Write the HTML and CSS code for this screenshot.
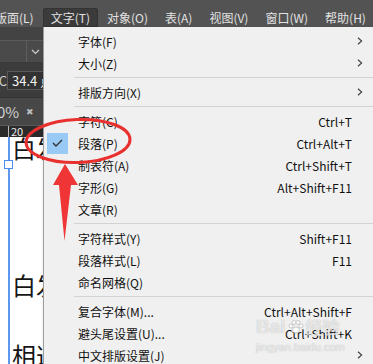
FILE: index.html
```html
<!DOCTYPE html>
<html lang="zh-CN">

<head>
    <meta charset="UTF-8" />
    <title>文字菜单</title>
    <link rel="stylesheet" href="styles.css">
</head>

<body>
    <!-- 菜单栏 -->
    <div class="menubar">
        <span class="mb-item first">版面(L)</span>
        <span class="mb-item active">文字(T)</span>
        <span class="mb-item">对象(O)</span>
        <span class="mb-item">表(A)</span>
        <span class="mb-item">视图(V)</span>
        <span class="mb-item">窗口(W)</span>
        <span class="mb-item">帮助(H)</span>
    </div>

    <!-- 工作区（左侧可见部分） -->
    <div class="workspace">
        <div class="p-row p-top"></div>
        <div class="p-row p-select">
            <span class="sel-field"></span>
            <span class="sel-drop">
                <svg width="9" height="6" viewBox="0 0 9 6"><path d="M1 1 L4.5 4.5 L8 1" fill="none" stroke="#cfcfcf" stroke-width="1.2"/></svg>
            </span>
        </div>
        <div class="p-row p-size">
            <span class="p-glyph">C</span>
            <span class="size-field">34.4 点</span>
        </div>
        <div class="p-row p-zoom">
            <span class="zoom-val">0%</span>
            <span class="zoom-x">✖</span>
        </div>
        <div class="ruler"><span class="tick"></span><span class="ruler-num">20</span></div>
        <div class="page">
            <span class="guide"></span>
            <span class="handle"></span>
            <p class="pg-line l1">白发渔樵</p>
            <p class="pg-line l2">白发渔樵</p>
            <p class="pg-line l3">相逢何必</p>
        </div>
    </div>

    <!-- 文字下拉菜单 -->
    <div class="menu">
        <div class="mi"><span></span><span>字体(F)</span><span></span><span class="sub"><svg width="6" height="8" viewBox="0 0 6 8"><path d="M1 0.8 L4.6 4 L1 7.2" fill="none" stroke="#444" stroke-width="1.2"/></svg></span></div>
        <div class="mi"><span></span><span>大小(Z)</span><span></span><span class="sub"><svg width="6" height="8" viewBox="0 0 6 8"><path d="M1 0.8 L4.6 4 L1 7.2" fill="none" stroke="#444" stroke-width="1.2"/></svg></span></div>
        <div class="sep"></div>
        <div class="mi"><span></span><span>排版方向(X)</span><span></span><span class="sub"><svg width="6" height="8" viewBox="0 0 6 8"><path d="M1 0.8 L4.6 4 L1 7.2" fill="none" stroke="#444" stroke-width="1.2"/></svg></span></div>
        <div class="sep"></div>
        <div class="mi"><span></span><span>字符(C)</span><span class="key">Ctrl+T</span><span></span></div>
        <div class="mi"><span class="ico"><svg width="11" height="8" viewBox="0 0 11 8"><path d="M1 4 L4 7 L10 1" fill="none" stroke="#333" stroke-width="1.4"/></svg></span><span>段落(P)</span><span class="key">Ctrl+Alt+T</span><span></span></div>
        <div class="mi"><span></span><span>制表符(A)</span><span class="key">Ctrl+Shift+T</span><span></span></div>
        <div class="mi"><span></span><span>字形(G)</span><span class="key">Alt+Shift+F11</span><span></span></div>
        <div class="mi"><span></span><span>文章(R)</span><span></span><span></span></div>
        <div class="sep"></div>
        <div class="mi"><span></span><span>字符样式(Y)</span><span class="key">Shift+F11</span><span></span></div>
        <div class="mi"><span></span><span>段落样式(L)</span><span class="key">F11</span><span></span></div>
        <div class="mi"><span></span><span>命名网格(Q)</span><span></span><span></span></div>
        <div class="sep"></div>
        <div class="mi"><span></span><span>复合字体(M)...</span><span class="key">Ctrl+Alt+Shift+F</span><span></span></div>
        <div class="mi"><span></span><span>避头尾设置(U)...</span><span class="key">Ctrl+Shift+K</span><span></span></div>
        <div class="mi"><span></span><span>中文排版设置(J)</span><span></span><span class="sub"><svg width="6" height="8" viewBox="0 0 6 8"><path d="M1 0.8 L4.6 4 L1 7.2" fill="none" stroke="#444" stroke-width="1.2"/></svg></span></div>
    </div>

    <!-- 红色标注 -->
    <svg class="annot" width="373" height="364" viewBox="0 0 373 364">
        <ellipse cx="78" cy="141" rx="52" ry="21.5" transform="rotate(-2 78 141)" fill="none" stroke="#e8312f" stroke-width="3"/>
        <path d="M65 164 L78 185 L71 185 L64.5 241 L59 185 L53 185 Z" fill="#ef3535"/>
    </svg>

    <!-- 水印 -->
    <div class="watermark">
        <div class="wm-top">Bai<svg width="16" height="14" viewBox="0 0 16 14"><g fill="#fff" stroke="#bbb" stroke-width="0.8"><circle cx="3" cy="6" r="2"/><circle cx="6" cy="2.5" r="2"/><circle cx="10" cy="2.5" r="2"/><circle cx="13" cy="6" r="2"/><ellipse cx="8" cy="10" rx="3.5" ry="3"/></g></svg><span>经验</span></div>
        <div class="wm-url">jingyan.baidu.com</div>
    </div>
</body>

</html>
```

FILE: styles.css
```css
* {
    box-sizing: border-box;
}

html,
body {
    margin: 0;
}

body {
    width: 373px;
    height: 364px;
    overflow: hidden;
    position: relative;
    background: #535353;
    font-family: "Noto Sans CJK SC", "Noto Sans", sans-serif;
    font-size: 12px;
}

/* 菜单栏 */
.menubar {
    height: 27px;
    display: flex;
    align-items: flex-end;
    background: #535353;
    color: #e2e2e2;
    white-space: nowrap;
}

.mb-item {
    height: 19px;
    line-height: 19px;
    padding: 0 8px;
    margin-right: 1px;
}

.mb-item.first {
    margin-left: -13px;
}

.mb-item.active {
    background: #3b3b3b;
    border-radius: 3px 3px 0 0;
    box-shadow: inset 0 0 0 1px #333;
}

/* 工作区 */
.workspace {
    height: 337px;
    display: flex;
    flex-direction: column;
    overflow: hidden;
}

.p-row {
    display: flex;
    align-items: center;
    flex-shrink: 0;
}

.p-top {
    height: 14px;
    background: #434343;
    border-bottom: 1px solid #5b5b5b;
}

.p-select {
    height: 22px;
    background: #4a4a4a;
    border-bottom: 1px solid #3a3a3a;
}

.sel-field {
    width: 27px;
    height: 100%;
    border-right: 1px solid #5e5e5e;
}

.sel-drop {
    width: 16px;
    display: flex;
    justify-content: center;
}

.p-size {
    height: 34px;
    background: #3c3c3c;
    color: #f2f2f2;
    font-size: 13px;
}

.p-glyph {
    width: 7px;
    overflow: hidden;
    direction: rtl;
    color: #cfcfcf;
}

.size-field {
    height: 19px;
    line-height: 18px;
    padding-left: 4px;
    flex: 1;
    background: #323232;
    border: 1px solid #5a5a5a;
    border-right: none;
    white-space: nowrap;
}

.p-zoom {
    height: 28px;
    background: #474747;
    color: #cfcfcf;
    font-size: 15px;
    border-top: 1px solid #333;
}

.zoom-val {
    margin-left: -3px;
    width: 29px;
}

.zoom-x {
    font-size: 9px;
    color: #bcbcbc;
}

.ruler {
    height: 12px;
    flex-shrink: 0;
    background: #2b2b2b;
    border-top: 1px solid #5a5a5a;
    display: flex;
    align-items: flex-end;
    color: #ececec;
    font-size: 11px;
    line-height: 11px;
}

.tick {
    width: 1px;
    height: 11px;
    margin-left: 8px;
    background: #bbb;
}

.ruler-num {
    margin-left: 2px;
}

.page {
    flex: 1;
    position: relative;
    background: #fff;
    padding-left: 12px;
    color: #151515;
}

.guide {
    position: absolute;
    left: 8px;
    top: 0;
    bottom: 0;
    width: 1.5px;
    background: #5b98ee;
}

.handle {
    position: absolute;
    left: 4px;
    top: 23px;
    width: 9px;
    height: 9px;
    background: #fff;
    border: 1px solid #4a8cec;
}

.pg-line {
    margin: 0;
    font-size: 24px;
    line-height: 24px;
    white-space: nowrap;
}

.l1 {
    margin-top: -1px;
}

.l2 {
    margin-top: 113px;
}

.l3 {
    margin-top: 46px;
}

/* 下拉菜单 */
.menu {
    position: absolute;
    left: 43px;
    top: 27px;
    width: 351px;
    height: 345px;
    padding-top: 3px;
    background: #f0f0f0;
    border-left: 1px solid #9c9c9c;
    box-shadow: 2px 2px 4px rgba(0, 0, 0, .3);
    color: #111;
}

.mi {
    display: grid;
    grid-template-columns: 34px 1fr auto 42px;
    align-items: center;
    height: 22px;
    white-space: nowrap;
}

.key {
    text-align: right;
}

.sub {
    display: flex;
    padding-left: 5px;
}

.ico {
    width: 21px;
    height: 21px;
    margin-left: 3px;
    background: #99c9f5;
    display: flex;
    align-items: center;
    justify-content: center;
}

.sep {
    height: 7px;
    margin-left: 30px;
    display: flex;
    align-items: center;
}

.sep::after {
    content: "";
    flex: 1;
    height: 1px;
    background: #d3d3d3;
}

/* 标注与水印 */
.annot {
    position: absolute;
    left: 0;
    top: 0;
    pointer-events: none;
}

.watermark {
    position: absolute;
    left: 256px;
    top: 316px;
    color: rgba(255, 255, 255, .7);
    text-shadow: 0 0 1px rgba(0, 0, 0, .3);
    font-family: "Liberation Sans", sans-serif;
    pointer-events: none;
}

.wm-top {
    display: flex;
    align-items: center;
    gap: 2px;
    font-size: 19px;
    font-weight: 700;
    line-height: 22px;
}

.wm-top span {
    font-family: "Noto Sans CJK SC", sans-serif;
    font-size: 17px;
}

.wm-url {
    font-size: 11px;
    line-height: 13px;
    margin-top: 3px;
}
```
